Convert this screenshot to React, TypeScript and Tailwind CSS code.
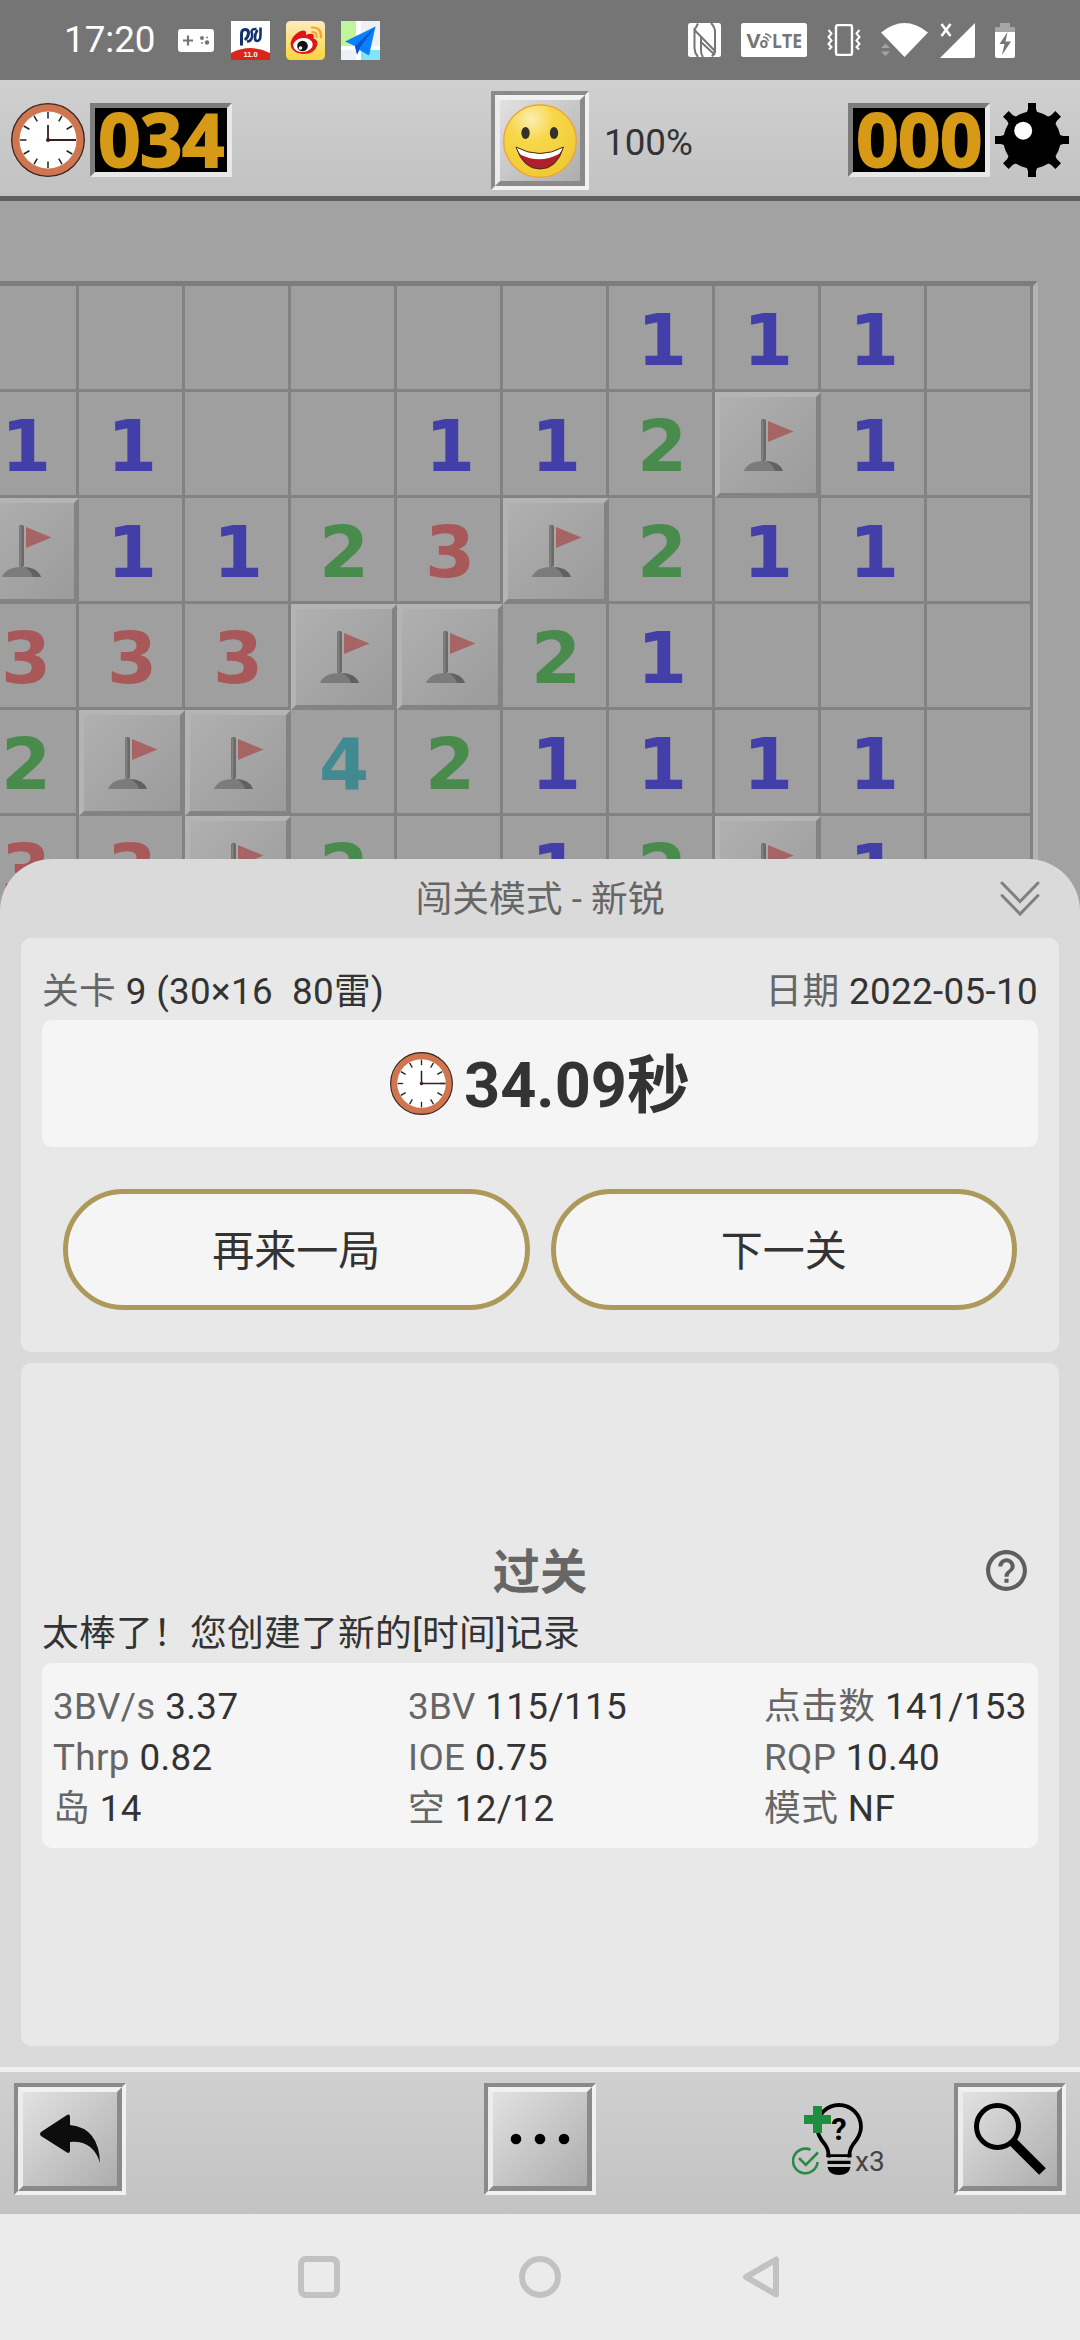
import type { ReactNode } from "react";

const BOARD = [
  "......111.",
  "11..112F1.",
  "F1123F211.",
  "333FF21...",
  "2FF421111.",
  "33F2.12F1.",
];

const NUMBER_COLORS: Record<string, string> = {
  "1": "text-[#4240a8]",
  "2": "text-[#488b4c]",
  "3": "text-[#a85858]",
  "4": "text-[#428a92]",
};

const STATS = [
  { label: "3BV/s", value: "3.37" },
  { label: "3BV", value: "115/115" },
  { label: "点击数", value: "141/153" },
  { label: "Thrp", value: "0.82" },
  { label: "IOE", value: "0.75" },
  { label: "RQP", value: "10.40" },
  { label: "岛", value: "14" },
  { label: "空", value: "12/12" },
  { label: "模式", value: "NF" },
];

function ClockIcon({ className }: { className: string }) {
  const ticks = Array.from({ length: 12 }, (_, i) => i * 30);
  return (
    <svg viewBox="0 0 74 74" className={className}>
      <circle cx="37" cy="37" r="36.3" fill="#cf7650" stroke="#3a2320" strokeWidth="1.3" />
      <circle cx="37" cy="37" r="28.5" fill="#fff" />
      {ticks.map((deg) => (
        <line key={deg} x1="37" y1="9" x2="37" y2="15.5" stroke="#222" strokeWidth="1.5" transform={`rotate(${deg} 37 37)`} />
      ))}
      <path d="M37 22V37H65" fill="none" stroke="#3a1f1f" strokeWidth="1.8" />
      <circle cx="37" cy="37" r="2" fill="#3a1f1f" />
    </svg>
  );
}

function MineIcon() {
  const spikes = Array.from({ length: 8 }, (_, i) => i * 45);
  return (
    <svg viewBox="0 0 74 74" className="size-[74px]">
      <circle cx="37" cy="37" r="28.5" />
      {spikes.map((deg) => (
        <path key={deg} d="M30 14L33 6V0H41V6L44 14Z" transform={`rotate(${deg} 37 37)`} />
      ))}
      <circle cx="28.2" cy="27.7" r="9" fill="#fff" />
    </svg>
  );
}

function SmileIcon() {
  return (
    <svg viewBox="0 0 74 74" className="size-[74px]">
      <defs>
        <radialGradient id="face" cx="0.38" cy="0.2" r="0.75">
          <stop offset="0" stopColor="#fbeeb4" />
          <stop offset="0.4" stopColor="#f7d84a" />
          <stop offset="1" stopColor="#f0cb34" />
        </radialGradient>
      </defs>
      <circle cx="37" cy="37" r="36.3" fill="url(#face)" stroke="#f0a53a" strokeWidth="1.4" />
      <ellipse cx="22.5" cy="29" rx="4.2" ry="6" fill="#33302a" />
      <ellipse cx="51" cy="29" rx="4.2" ry="6" fill="#33302a" />
      <path d="M13 43Q37 56 60.5 43Q54 65 37 65Q20 65 13 43Z" fill="#ae1f2b" />
      <path d="M13 43Q37 56 60.5 43Q58.500 47.500 56 50Q37 60 18 51Q15 48 13 43Z" fill="#fff" />
      <path d="M13 43Q37 56 60.5 43Q54 65 37 65Q20 65 13 43Z" fill="none" stroke="#43301f" strokeWidth="1" />
    </svg>
  );
}

function FlagIcon() {
  return (
    <svg viewBox="5 5 96 96" className="size-[96px]">
      <path d="M29 79Q33 69 48 69Q64 69 68 79Z" fill="#7d7b79" />
      <path d="M51 69Q64 69 68 79H60Q58 72 51 69Z" fill="#626160" />
      <rect x="46" y="27" width="5" height="42" rx="2" fill="#6b6a68" />
      <rect x="46.500" y="28" width="1.800" height="40" fill="#858381" />
      <path d="M53 29L78.500 39.500L53 50Z" fill="#a66465" />
    </svg>
  );
}

function Bevel({ className, children }: { className: string; children: ReactNode }) {
  return (
    <div className={`border-4 border-t-[#8a8a8a] border-l-[#8a8a8a] border-r-[#f1f1f1] border-b-[#f1f1f1] ${className}`}>
      <div className="flex size-full items-center justify-center border-[5px] border-t-[#f1f1f1] border-l-[#ececec] border-r-[#8a8a8a] border-b-[#8a8a8a] bg-linear-to-br from-[#e2e2e2] to-[#adadad]">
        {children}
      </div>
    </div>
  );
}

function Counter({ value }: { value: string }) {
  return (
    <div className="flex h-[74px] w-[142px] items-center justify-center border-[5px] border-t-[#7c7c7c] border-l-[#7c7c7c] border-r-[#e8e8e8] border-b-[#e8e8e8] bg-black">
      <span className="pb-[2px] font-['Open_Sans',sans-serif] text-[74px] leading-[62px] font-bold tracking-[-0.500px] text-[#d69a17] [-webkit-text-stroke:1.8px_#d69a17]">
        {value}
      </span>
    </div>
  );
}

function StatusBar() {
  return (
    <div className="flex h-[80px] items-center bg-[#757575] pl-[64px] text-white">
      <span className="w-[114px] text-[36.750px] leading-[80px]">17:20</span>
      <svg viewBox="0 0 36 23" className="h-[23px] w-[36px]">
        <rect width="36" height="23" rx="3" fill="#fff" />
        <path d="M10 6.500V16.500M5 11.500H15" stroke="#757575" strokeWidth="2.200" />
        <circle cx="24" cy="9" r="2" fill="#757575" />
        <circle cx="29" cy="13.500" r="2.200" fill="#757575" />
        <circle cx="24" cy="14" r="0.900" fill="#757575" />
        <circle cx="29" cy="8.500" r="0.900" fill="#757575" />
      </svg>
      <svg viewBox="0 0 39 39" className="ml-[17px] size-[39px]">
        <rect width="39" height="39" fill="#fff" />
        <path d="M10.500 24.500V13Q10.500 8.500 14 8.500Q17.500 8.500 17.500 12Q17.500 15.500 14 19" fill="none" stroke="#12336f" strokeWidth="3" />
        <path d="M25.500 8Q20.500 7.500 20.500 11Q21.500 13 21 16Q20 20.500 16 20.500M29.500 6.500V14Q29.500 20 26 20Q24 20 24 16.500Q24 12.500 26.500 9" fill="none" stroke="#12336f" strokeWidth="2.600" />
        <path d="M0 39V32Q19.500 22 39 32V39Z" fill="#dd2419" />
        <text x="19.500" y="36" fill="#fff" fontSize="7.500" fontWeight="bold" textAnchor="middle" fontFamily="Liberation Sans">11.0</text>
      </svg>
      <svg viewBox="0 0 39 39" className="ml-4 size-[39px]">
        <defs>
          <linearGradient id="weibo" x1="0" y1="0" x2="0" y2="1">
            <stop offset="0" stopColor="#fdecc0" />
            <stop offset="1" stopColor="#fbd53c" />
          </linearGradient>
        </defs>
        <rect width="39" height="39" rx="4.500" fill="url(#weibo)" />
        <path d="M4.500 23Q5 17 10.500 12.500Q16 8 19.500 10Q20.500 12 20 14Q24 12 26.500 13Q28.500 14.500 27.500 17.500Q32 19 31.500 23.500Q29 33 17 33Q5 32 4.500 23Z" fill="#e1131b" />
        <ellipse cx="17" cy="24" rx="9.800" ry="7" fill="#fff" transform="rotate(-8 17 24)" />
        <circle cx="16.500" cy="25" r="5.300" fill="#111" />
        <circle cx="14.500" cy="27" r="1.800" fill="#fff" />
        <path d="M26 6.500Q35.500 6 35 16.500M26.500 11Q31 11 30.500 16" fill="none" stroke="#f8a32b" strokeWidth="2.200" strokeLinecap="round" />
      </svg>
      <svg viewBox="0 0 39 39" className="ml-4 size-[39px]">
        <rect width="39" height="39" fill="#eef0f7" />
        <path d="M0 0H15V25H0Z" fill="#c1f59b" />
        <path d="M20 29H39V39H20Z" fill="#80e4fb" />
        <path d="M15 0H20V39H15ZM0 25H39V29H0Z" fill="#fff" />
        <path d="M34.500 5.500L4 20.500L14 25L16 33.500L18.500 29L28 34.500Z" fill="#0b80fb" />
        <path d="M34.500 5.500L14 25L16 33.500L19 26.500Z" fill="#0757cf" />
      </svg>

      <svg viewBox="0 0 33 34" className="ml-auto h-[34px] w-[33px]">
        <rect width="33" height="34" rx="2.500" fill="#fff" />
        <path d="M10 34Q6.500 30 6.500 25V7L27 28V9Q27 4 23 0M6.500 7L10 0.500M27 28L24 33.500M13 13V28Q13 31 15 34M13 19L27 32" fill="none" stroke="#757575" strokeWidth="2" />
      </svg>
      <svg viewBox="0 0 66 34" className="ml-5 h-[34px] w-[66px]">
        <rect width="66" height="34" rx="2.500" fill="#fff" />
        <text x="5.500" y="24.500" fill="#757575" fontSize="19.500" fontWeight="bold" fontFamily="Open Sans" textLength="14" lengthAdjust="spacingAndGlyphs">V</text>
        <text x="18.500" y="24.500" fill="#757575" fontSize="14" fontWeight="bold" fontFamily="Open Sans">o</text>
        <text x="31" y="24.500" fill="#757575" fontSize="19.500" fontWeight="bold" fontFamily="Open Sans" textLength="30" lengthAdjust="spacingAndGlyphs">LTE</text>
        <path d="M22 14Q26 14 27.500 18M24 11Q28 11 30 15" fill="none" stroke="#757575" strokeWidth="1.500" />
      </svg>
      <svg viewBox="0 0 34 32" className="ml-5 h-[32px] w-[34px]" fill="none" stroke="#fff" strokeWidth="2">
        <rect x="9" y="1" width="16" height="30" rx="2" strokeWidth="2.400" />
        <path d="M1.500 6L4.500 9.500L1.500 13L4.500 16.500L1.500 20L4.500 23L2 25.500M32.500 6L29.500 9.500L32.500 13L29.500 16.500L32.500 20L29.500 23L32 25.500" />
      </svg>
      <svg viewBox="0 0 47 34" className="ml-5 h-[34px] w-[47px]">
        <path d="M0 9.500Q23.500 -9.500 47 9.500L23.500 34Z" fill="#fff" />
        <path d="M0 25L4.500 20.500L9 25ZM0 28.500H9L4.500 33Z" fill="#a5a5a5" />
      </svg>
      <svg viewBox="0 0 35 35" className="ml-3 size-[35px]">
        <path d="M35 0V33Q35 35 33 35H0Z" fill="#fff" />
        <path d="M1.500 1L10.500 13M10.500 1L1.500 13" stroke="#fff" strokeWidth="2.600" />
      </svg>
      <svg viewBox="0 0 20 35" className="mr-[65px] ml-5 h-[35px] w-[20px]">
        <path d="M0 9V5Q0 4 1 4H5V0H15V4H19Q20 4 20 5V9Z" fill="#a5a5a5" />
        <path d="M0 9H20V33Q20 35 18 35H2Q0 35 0 33Z" fill="#fff" />
        <path d="M12.500 9L4.500 21H9.500L7 32L16 18.500H10.500Z" fill="#757575" />
      </svg>
    </div>
  );
}

function Board() {
  return (
    <div className="h-[721px] overflow-hidden bg-[#a2a2a2] pt-[80px]">
      <div className="-ml-[27px] w-[1065px] border-t-[5px] border-r-[5px] border-t-[#7d7d7d] border-r-[#b3b3b3]">
        {BOARD.map((row, r) => (
          <div key={r} className="flex">
            {row.split("").map((cell, c) =>
              cell === "F" ? (
                <div
                  key={c}
                  className="size-[106px] border-[5px] border-t-[#b4b4b4] border-l-[#b4b4b4] border-r-[#838383] border-b-[#838383] bg-linear-to-br from-[#b0b0b0] to-[#9b9b9b]"
                >
                  <FlagIcon />
                </div>
              ) : (
                <div
                  key={c}
                  className={`flex size-[106px] justify-center border-r-[3px] border-b-[3px] border-[#828282] bg-[#9f9f9f] pl-[3px] font-['DejaVu_Sans',sans-serif] text-[72px] leading-[109px] font-bold ${NUMBER_COLORS[cell] ?? ""}`}
                >
                  {cell === "." ? "" : cell}
                </div>
              )
            )}
          </div>
        ))}
      </div>
    </div>
  );
}

function ResultSheet() {
  return (
    <div className="relative -mt-[63px] flex h-[1208px] flex-col rounded-t-[52px] bg-[#dadada] px-[21px]">
      <div className="relative flex h-[79px] items-center justify-center text-[#666]">
        <span className="pt-[3px] leading-none">闯关模式 - 新锐</span>
        <svg viewBox="0 0 40 36" className="absolute top-[22px] right-[19px] h-[36px] w-[40px]" fill="none" stroke="#808080" strokeWidth="3" strokeLinecap="round">
          <path d="M2 2L20 20.500L38 2M2 14.500L20 33L38 14.500" />
        </svg>
      </div>

      <div className="h-[414px] rounded-[10px] bg-[#e8e8e8] px-[21px] pt-[30px]">
        <div className="flex h-[52px] justify-between leading-[48px] tracking-[0.350px] whitespace-pre">
          <p>
            <span className="text-[#666]">关卡</span> 9 (30×16  80雷)
          </p>
          <p>
            <span className="text-[#666]">日期</span> 2022-05-10
          </p>
        </div>
        <div className="flex h-[127px] items-center justify-center gap-[11px] rounded-[10px] bg-[#f5f5f5]">
          <ClockIcon className="size-[63px]" />
          <span className="pt-[4px] text-[63px] leading-[74px] font-bold">34.09秒</span>
        </div>
        <div className="mt-[42px] grid grid-cols-2 gap-[21px] px-[21px]">
          <button className="h-[121px] rounded-full border-[5px] border-[#ad995a] bg-[#f5f5f5] pt-[3px] text-[42px]">再来一局</button>
          <button className="h-[121px] rounded-full border-[5px] border-[#ad995a] bg-[#f5f5f5] pt-[3px] text-[42px]">下一关</button>
        </div>
      </div>

      <div className="mt-[11px] h-[683px] rounded-[10px] bg-[#e8e8e8] px-[21px] pt-[180px]">
        <div className="relative flex h-[56px] items-center justify-center">
          <h2 className="pt-[6px] text-[47.250px] leading-none font-bold text-[#666]">过关</h2>
          <svg viewBox="0 0 24 24" className="absolute top-[3px] right-[7px] size-[49px]" fill="#5f5f5f">
            <path d="M11 18h2v-2h-2v2zm1-16C6.480 2 2 6.480 2 12s4.480 10 10 10 10-4.480 10-10S17.520 2 12 2zm0 18c-4.410 0-8-3.590-8-8s3.590-8 8-8 8 3.590 8 8-3.590 8-8 8zm0-14c-2.210 0-4 1.790-4 4h2c0-1.100.9-2 2-2s2 .9 2 2c0 2-3 1.750-3 5h2c0-2.250 3-2.500 3-5 0-2.210-1.790-4-4-4z" />
          </svg>
        </div>
        <p className="h-[64px] leading-[69px] tracking-[0.250px]">太棒了！您创建了新的[时间]记录</p>
        <div className="grid h-[185px] grid-cols-[355px_356px_auto] content-center rounded-[10px] bg-[#f5f5f5] px-[11px] pt-[3px] leading-[51px] tracking-[0.400px] whitespace-nowrap">
          {STATS.map((s) => (
            <div key={s.label}>
              <span className="text-[#666]">{s.label}</span> {s.value}
            </div>
          ))}
        </div>
      </div>
    </div>
  );
}

function HintButton() {
  return (
    <div className="mr-[71px] flex h-[112px] w-[91px] items-center">
      <svg viewBox="0 0 72 72" className="size-[72px] shrink-0">
        <path d="M36.500 54.500Q37 47 33 41.500Q25 32 25 24A22 22 0 0 1 69 24Q69 32 61 41.500Q57 47 57.500 54.500" fill="none" stroke="#000" strokeWidth="3.800" />
        <path d="M34.500 51.200H59.500V54H34.500ZM35.500 57.700H58.500V61H35.500ZM35.500 64H58.500Q57 72 47 72Q37 72 35.500 64Z" />
        <text x="47" y="37" fontSize="31" fontWeight="bold" textAnchor="middle" fontFamily="Roboto">?</text>
        <path d="M21 3H30V12H39V21H30V30H21V21H12V12H21Z" fill="#1f8f3f" />
        <path d="M18.500 46.800A12.300 12.300 0 1 0 25.600 59" fill="none" stroke="#2a8a44" strokeWidth="2.600" />
        <path d="M7 55L13.800 62L26 49.500" fill="none" stroke="#2a8a44" strokeWidth="2.600" />
      </svg>
      <span className="-ml-[9px] pt-[45px] text-[28px] leading-none text-[#444]">x3</span>
    </div>
  );
}

export default function App() {
  return (
    <div className="h-[2340px] w-[1080px] overflow-hidden bg-[#ebebeb] font-['Roboto','Noto_Sans_CJK_SC',sans-serif] text-[36.750px] text-[#333]">
      <StatusBar />

      <header className="grid h-[121px] grid-cols-[1fr_98px_1fr] items-center border-b-[5px] border-[#606060] bg-linear-to-b from-[#d0d0d0] to-[#c2c2c2]">
        <div className="flex items-center gap-[5px] pt-1 pl-[11px]">
          <ClockIcon className="size-[74px]" />
          <Counter value="034" />
        </div>
        <Bevel className="mt-[5px] h-[99px] w-[98px]">
          <SmileIcon />
        </Bevel>
        <div className="flex items-center pt-1 pr-[11px] pl-[15px]">
          <span className="mt-1.5">100%</span>
          <div className="ml-auto flex items-center gap-[5px]">
            <Counter value="000" />
            <MineIcon />
          </div>
        </div>
      </header>

      <Board />
      <ResultSheet />

      <footer className="grid h-[147px] grid-cols-[1fr_112px_1fr] border-t-[5px] border-[#efefef] bg-linear-to-b from-[#d0d0d0] to-[#c2c2c2] px-[14px] pt-[11px]">
        <Bevel className="size-[112px]">
          <svg viewBox="0 0 94 94" className="size-[94px]" fill="#0d0d0d">
            <path d="M18 40L44 23Q47 21.500 47 25V33Q76 36 77 71Q70 48 47 50V58.500Q47 62 44 60.500L18 44Q16 42 18 40Z" />
          </svg>
        </Bevel>
        <Bevel className="size-[112px]">
          <svg viewBox="0 0 94 94" className="size-[94px]">
            <circle cx="23" cy="47" r="5.300" />
            <circle cx="47" cy="47" r="5.300" />
            <circle cx="71" cy="47" r="5.300" />
          </svg>
        </Bevel>
        <div className="flex justify-end">
          <HintButton />
          <Bevel className="size-[112px]">
            <svg viewBox="0 0 94 94" className="size-[94px]" fill="none" stroke="#000">
              <circle cx="34.500" cy="34.500" r="21" strokeWidth="5" />
              <path d="M50 50L79.500 79.500" strokeWidth="9.500" />
            </svg>
          </Bevel>
        </div>
      </footer>

      <nav className="flex h-[126px] items-center justify-center gap-[179px] pr-[1px]">
        <div className="size-[42px] rounded-[8px] border-[6px] border-[#c2c2c2]" />
        <div className="size-[42px] rounded-full border-[6px] border-[#c2c2c2]" />
        <svg viewBox="0 0 42 42" className="size-[42px]" fill="none" stroke="#c2c2c2" strokeWidth="6" strokeLinejoin="round">
          <path d="M36 3.500V38.500L6 21Z" />
        </svg>
      </nav>
    </div>
  );
}
